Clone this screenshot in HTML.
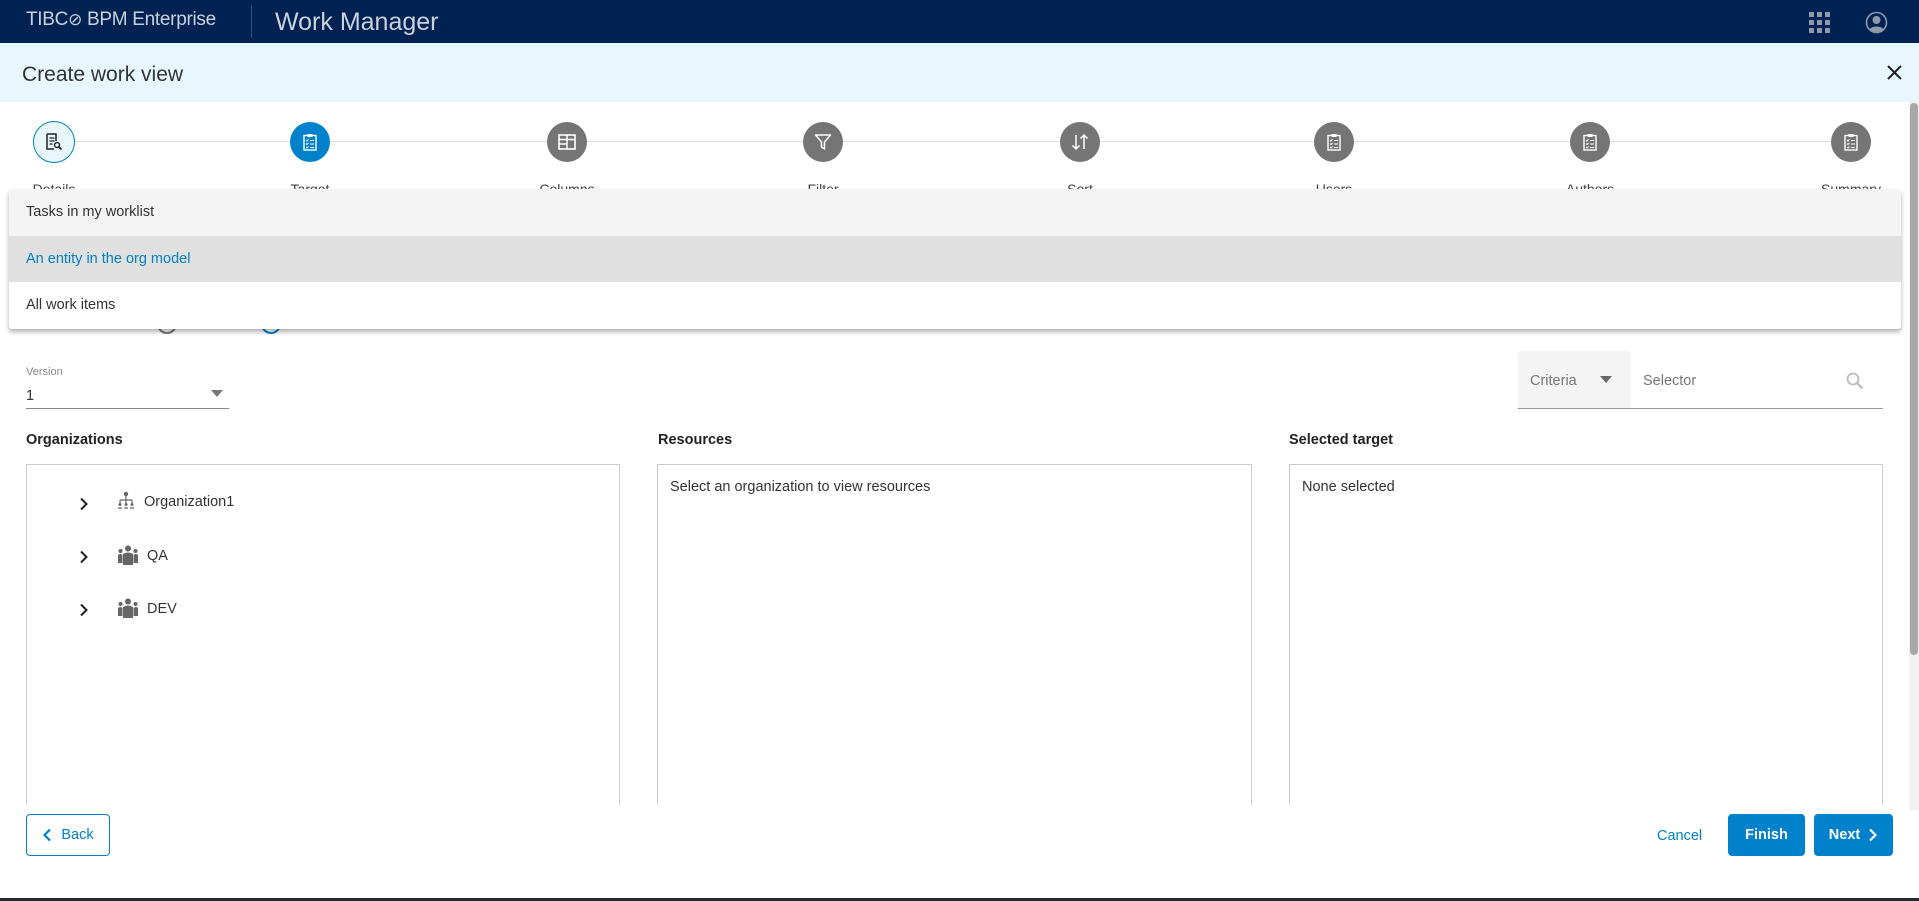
<!DOCTYPE html>
<html><head><meta charset="utf-8"><style>
*{box-sizing:border-box;margin:0;padding:0}
body{width:1919px;height:901px;overflow:hidden;background:#fff;font-family:"Liberation Sans",sans-serif;color:#333;position:relative}
.abs{position:absolute}
.hdr{left:0;top:0;width:1919px;height:43px;background:#002253}
.sub{left:0;top:43px;width:1919px;height:59px;background:#e8f7fe}
.circ{position:absolute;width:40px;height:40px;border-radius:50%;background:#757575;top:122px;display:flex;align-items:center;justify-content:center}
.lbl{position:absolute;top:181px;font-size:14px;color:#444;transform:translateX(-50%)}
.dd{left:9px;top:189px;width:1892px;height:140px;background:#fff;box-shadow:0 3px 5px rgba(0,0,0,.3);border-radius:3px;z-index:5;overflow:hidden}
.dd div{height:46.6px;line-height:46.6px;padding-left:17px;font-size:14.5px;color:#333}
.h{font-weight:bold;font-size:14.5px;color:#222;top:432px}
.panel{top:464px;height:360px;border:1px solid #ccc;border-bottom:none;background:#fff}
.btn{top:814px;height:42px;border-radius:4px;font-size:14.5px;display:flex;align-items:center;justify-content:center;font-weight:bold}
.tree{font-size:14.5px;color:#333}
</style></head><body>
<div class="abs hdr"></div>
<div class="abs" style="left:26px;top:9px;font-size:19px;color:#c9d1dd;letter-spacing:-0.3px">TIBC<span style="font-size:17px">⊘</span> BPM Enterprise</div>
<div class="abs" style="left:251px;top:6px;width:1px;height:32px;background:#3a4f72"></div>
<div class="abs" style="left:275px;top:8px;font-size:25px;color:#c9d1dd">Work Manager</div>
<svg class="abs" style="left:1809px;top:12px" width="21" height="21"><g fill="#8e99aa"><rect x="0" y="0" width="5" height="5"/><rect x="8" y="0" width="5" height="5"/><rect x="16" y="0" width="5" height="5"/><rect x="0" y="8" width="5" height="5"/><rect x="8" y="8" width="5" height="5"/><rect x="16" y="8" width="5" height="5"/><rect x="0" y="16" width="5" height="5"/><rect x="8" y="16" width="5" height="5"/><rect x="16" y="16" width="5" height="5"/></g></svg>
<svg class="abs" style="left:1865px;top:11px" width="23" height="23" viewBox="0 0 23 23"><circle cx="11.5" cy="11.5" r="10" fill="none" stroke="#8e99aa" stroke-width="1.6"/><circle cx="11.5" cy="9" r="4" fill="#8e99aa"/><path d="M4.5 18.5c2-4 12-4 14 0c-3 3-11 3-14 0z" fill="#8e99aa"/></svg>
<div class="abs sub"></div>
<div class="abs" style="left:22px;top:63px;font-size:21px;color:#333">Create work view</div>
<svg class="abs" style="left:1887px;top:65px" width="15" height="15"><path d="M1 1L14 14M14 1L1 14" stroke="#222" stroke-width="2"/></svg>
<div class="abs" style="left:1909px;top:102px;width:10px;height:708px;background:#f1f1f1"></div>
<div class="abs" style="left:1910px;top:103px;width:8px;height:552px;background:#a8a8a8;border-radius:4px"></div>
<div class="abs" style="left:56px;top:141px;width:1795px;height:1px;background:#ddd"></div>
<div class="circ" style="left:33px;top:121px;width:42px;height:42px;background:#e8f7fe;border:1.5px solid #0081cb"><svg width="18" height="18" viewBox="0 0 18 18"><path d="M2 1h9v7M2 1v15h7" fill="none" stroke="#222" stroke-width="1.5"/><path d="M4.5 5h5M4.5 8h5M4.5 11h3" stroke="#222" stroke-width="1.3"/><circle cx="12" cy="12" r="2.5" fill="none" stroke="#222" stroke-width="1.4"/><path d="M14 14l2.5 2.5" stroke="#222" stroke-width="1.6"/></svg></div>
<div class="circ" style="left:290px;background:#0081cb"><svg width="14" height="18" viewBox="0 0 14 18"><rect x="1" y="2.5" width="12" height="14.5" fill="none" stroke="#fff" stroke-width="1.4"/><rect x="4.5" y="1" width="5" height="3" fill="#fff"/><path d="M3 7l1 1 1.5-1.5M7 7.5h4M3 10.5l1 1 1.5-1.5M7 11h4M3 14l1 1 1.5-1.5M7 14.5h4" stroke="#fff" stroke-width="1" fill="none"/></svg></div>
<div class="circ" style="left:547px"><svg width="18" height="16" viewBox="0 0 18 16"><rect x="1" y="1" width="16" height="14" fill="none" stroke="#fff" stroke-width="1.6"/><path d="M9 1v14M1 5.5h16M1 10h8" stroke="#fff" stroke-width="1.5"/></svg></div>
<div class="circ" style="left:803px"><svg width="18" height="18" viewBox="0 0 18 18"><path d="M1.5 2h15l-6 7v7l-3-2V9z" fill="none" stroke="#fff" stroke-width="1.5" stroke-linejoin="round"/></svg></div>
<div class="circ" style="left:1060px"><svg width="20" height="20" viewBox="0 0 20 20"><path d="M6 3v14M2.5 13.5L6 17l3.5-3.5M14 17V3M10.5 6.5L14 3l3.5 3.5" fill="none" stroke="#fff" stroke-width="1.5"/></svg></div>
<div class="circ" style="left:1314px"><svg width="14" height="18" viewBox="0 0 14 18"><rect x="1" y="2.5" width="12" height="14.5" fill="none" stroke="#fff" stroke-width="1.4"/><rect x="4.5" y="1" width="5" height="3" fill="#fff"/><path d="M3 7l1 1 1.5-1.5M7 7.5h4M3 10.5l1 1 1.5-1.5M7 11h4M3 14l1 1 1.5-1.5M7 14.5h4" stroke="#fff" stroke-width="1" fill="none"/></svg></div>
<div class="circ" style="left:1570px"><svg width="14" height="18" viewBox="0 0 14 18"><rect x="1" y="2.5" width="12" height="14.5" fill="none" stroke="#fff" stroke-width="1.4"/><rect x="4.5" y="1" width="5" height="3" fill="#fff"/><path d="M3 7l1 1 1.5-1.5M7 7.5h4M3 10.5l1 1 1.5-1.5M7 11h4M3 14l1 1 1.5-1.5M7 14.5h4" stroke="#fff" stroke-width="1" fill="none"/></svg></div>
<div class="circ" style="left:1831px"><svg width="14" height="18" viewBox="0 0 14 18"><rect x="1" y="2.5" width="12" height="14.5" fill="none" stroke="#fff" stroke-width="1.4"/><rect x="4.5" y="1" width="5" height="3" fill="#fff"/><path d="M3 7l1 1 1.5-1.5M7 7.5h4M3 10.5l1 1 1.5-1.5M7 11h4M3 14l1 1 1.5-1.5M7 14.5h4" stroke="#fff" stroke-width="1" fill="none"/></svg></div>
<div class="lbl" style="left:54px">Details</div><div class="lbl" style="left:310px">Target</div><div class="lbl" style="left:567px">Columns</div><div class="lbl" style="left:823px">Filter</div><div class="lbl" style="left:1080px">Sort</div><div class="lbl" style="left:1334px">Users</div><div class="lbl" style="left:1590px">Authors</div><div class="lbl" style="left:1851px">Summary</div>
<div class="abs" style="left:157px;top:314px;width:20px;height:20px;border-radius:50%;border:2px solid #777"></div>
<div class="abs" style="left:261px;top:314px;width:20px;height:20px;border-radius:50%;border:2px solid #0081cb"></div>
<div class="abs dd"><div style="background:#f4f4f4">Tasks in my worklist</div><div style="background:#e0e0e0;color:#0081cb">An entity in the org model</div><div>All work items</div></div>
<div class="abs" style="left:26px;top:366px;font-size:11px;color:#888">Version</div>
<div class="abs" style="left:26px;top:388px;font-size:14.5px">1</div>
<svg class="abs" style="left:211px;top:390px" width="12" height="7"><path d="M0 0h12L6 7z" fill="#777"/></svg>
<div class="abs" style="left:26px;top:408px;width:203px;height:1px;background:#888"></div>
<div class="abs" style="left:1518px;top:351px;width:113px;height:57px;background:#f4f4f4;border-radius:3px 3px 0 0"></div>
<div class="abs" style="left:1530px;top:373px;font-size:14.5px;color:#777">Criteria</div>
<svg class="abs" style="left:1600px;top:376px" width="12" height="7"><path d="M0 0h12L6 7z" fill="#666"/></svg>
<div class="abs" style="left:1643px;top:373px;font-size:14.5px;color:#777">Selector</div>
<svg class="abs" style="left:1846px;top:372px" width="18" height="18" viewBox="0 0 18 18"><circle cx="7" cy="7" r="5.5" fill="none" stroke="#bbb" stroke-width="1.8"/><path d="M11 11l5.5 5.5" stroke="#bbb" stroke-width="2.2"/></svg>
<div class="abs" style="left:1518px;top:408px;width:365px;height:1px;background:#999"></div>
<div class="abs h" style="left:26px">Organizations</div>
<div class="abs h" style="left:658px">Resources</div>
<div class="abs h" style="left:1289px">Selected target</div>
<div class="abs panel" style="left:26px;width:594px"></div>
<div class="abs panel" style="left:657px;width:595px"></div>
<div class="abs panel" style="left:1289px;width:594px"></div>
<div class="abs" style="left:670px;top:479px;font-size:14.5px">Select an organization to view resources</div>
<div class="abs" style="left:1302px;top:479px;font-size:14.5px">None selected</div>
<svg class="abs" style="left:79px;top:497px" width="10" height="14"><path d="M2 1.5L7.5 7L2 12.5" fill="none" stroke="#222" stroke-width="2"/></svg>
<svg class="abs" style="left:79px;top:550px" width="10" height="14"><path d="M2 1.5L7.5 7L2 12.5" fill="none" stroke="#222" stroke-width="2"/></svg>
<svg class="abs" style="left:79px;top:603px" width="10" height="14"><path d="M2 1.5L7.5 7L2 12.5" fill="none" stroke="#222" stroke-width="2"/></svg>
<svg class="abs" style="left:117px;top:491px" width="18" height="18" viewBox="0 0 18 18"><g fill="none" stroke="#666" stroke-width="1.2"><circle cx="9" cy="3" r="1.6" fill="#666"/><path d="M9 5v4M3 9h12M3 9v3M9 9v3M15 9v3"/></g><circle cx="3" cy="13.5" r="1.5" fill="#666"/><circle cx="9" cy="13.5" r="1.5" fill="#666"/><circle cx="15" cy="13.5" r="1.5" fill="#666"/><path d="M1 17h4M7 17h4M13 17h4" stroke="#666" stroke-width="1.2"/></svg>
<div class="abs tree" style="left:144px;top:494px">Organization1</div>
<svg class="abs" style="left:117px;top:545px" width="22" height="20" viewBox="0 0 22 20"><g fill="#666"><circle cx="11" cy="3.5" r="3"/><path d="M6 9q5-3 10 0v11H6z"/><circle cx="3.5" cy="6" r="2"/><path d="M1 10q2.5-2 4.5 0v8H1z"/><circle cx="18.5" cy="6" r="2"/><path d="M16.5 10q2.5-2 4.5 0v8h-4.5z"/></g></svg>
<div class="abs tree" style="left:147px;top:548px">QA</div>
<svg class="abs" style="left:117px;top:598px" width="22" height="20" viewBox="0 0 22 20"><g fill="#666"><circle cx="11" cy="3.5" r="3"/><path d="M6 9q5-3 10 0v11H6z"/><circle cx="3.5" cy="6" r="2"/><path d="M1 10q2.5-2 4.5 0v8H1z"/><circle cx="18.5" cy="6" r="2"/><path d="M16.5 10q2.5-2 4.5 0v8h-4.5z"/></g></svg>
<div class="abs tree" style="left:147px;top:601px">DEV</div>
<div class="abs" style="left:0;top:805px;width:1909px;height:93px;background:#fff"></div>
<div class="abs btn" style="left:26px;width:84px;border:1.5px solid #0081cb;color:#0081cb;font-weight:normal"><svg width="10" height="14" style="margin-right:9px"><path d="M8 1.5L2.5 7L8 12.5" fill="none" stroke="#0081cb" stroke-width="2.2"/></svg>Back</div>
<div class="abs" style="left:1657px;top:828px;font-size:14.5px;color:#0081cb">Cancel</div>
<div class="abs btn" style="left:1728px;width:77px;background:#0081cb;color:#fff">Finish</div>
<div class="abs btn" style="left:1814px;width:79px;background:#0081cb;color:#fff">Next<svg width="10" height="14" style="margin-left:8px"><path d="M2 1.5L7.5 7L2 12.5" fill="none" stroke="#fff" stroke-width="2.2"/></svg></div>
<div class="abs" style="left:0;top:898px;width:1919px;height:3px;background:#1c2b33"></div>
</body></html>
